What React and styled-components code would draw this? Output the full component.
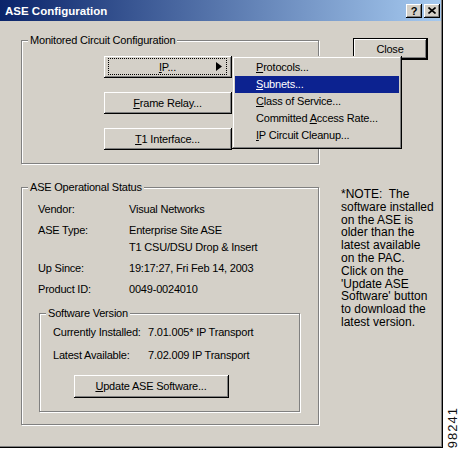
import React from "react";
import styled, { createGlobalStyle } from "styled-components";

const GlobalStyle = createGlobalStyle`
  html, body {
    margin: 0;
    padding: 0;
    background: #ffffff;
  }
  body {
    font-family: "Liberation Sans", Arial, sans-serif;
    font-size: 11px;
    letter-spacing: -0.2px;
    color: #000000;
  }
`;

const Page = styled.div`
  display: flex;
  width: 460px;
  height: 449px;
`;

const Window = styled.div`
  width: 446px;
  height: 448px;
  box-sizing: border-box;
  padding: 0 2px 2px 0;
  background: #d4d0c8;
  box-shadow: inset -1px -1px #000000, inset -2px -2px #808080;
  display: flex;
  flex-direction: column;
`;

const TitleBar = styled.div`
  flex: none;
  height: 21px;
  display: flex;
  align-items: center;
  padding: 0 1px 0 5px;
  background: linear-gradient(to right, #0a246a, #a6caf0);
`;

const Title = styled.span`
  flex: 1;
  color: #ffffff;
  font-weight: bold;
  font-size: 11.5px;
  letter-spacing: 0;
`;

const CaptionButtons = styled.div`
  display: flex;
  gap: 2px;
`;

const CaptionButton = styled.button`
  width: 16px;
  height: 14px;
  padding: 0;
  border: none;
  background: #d4d0c8;
  box-shadow: inset -1px -1px #000000, inset 1px 1px #ffffff, inset -2px -2px #808080;
  display: flex;
  align-items: center;
  justify-content: center;
  font: bold 11px "Liberation Sans", Arial, sans-serif;
  color: #000000;
`;

const Body = styled.div`
  flex: 1;
  display: grid;
  grid-template-columns: 298px 1fr;
  grid-template-rows: auto auto;
  align-content: start;
  align-items: start;
  row-gap: 23px;
  padding: 19px 0 0 21px;
`;

const Group = styled.div`
  border: 1px solid #808080;
  box-shadow: inset 1px 1px #ffffff, 1px 1px #ffffff;
  margin: ${(p) => p.$margin || "0"};
  width: ${(p) => p.$width || "auto"};
  box-sizing: border-box;
`;

const GroupCaption = styled.div`
  width: fit-content;
  margin: -7px 0 0 6px;
  padding: 0 2px;
  line-height: 13px;
  background: #d4d0c8;
  white-space: nowrap;
`;

const GroupBody = styled.div`
  padding: ${(p) => p.$pad};
`;

const ButtonColumn = styled.div`
  display: flex;
  flex-direction: column;
  gap: 14px;
  padding: 9px 0 13px 82px;
`;

const Anchor = styled.div`
  position: relative;
  width: fit-content;
`;

const Button = styled.button`
  width: ${(p) => p.$w}px;
  height: ${(p) => p.$h || 22}px;
  margin: ${(p) => p.$margin || "0"};
  padding: 0;
  border: none;
  background: #d4d0c8;
  font: 11px "Liberation Sans", Arial, sans-serif;
  letter-spacing: -0.2px;
  color: #000000;
  display: flex;
  box-shadow: ${(p) =>
    p.$default
      ? "inset 0 0 0 1px #000, inset -2px -2px #000, inset 2px 2px #fff, inset -3px -3px #808080"
      : "inset -1px -1px #000, inset 1px 1px #fff, inset -2px -2px #808080"};
`;

const Face = styled.span`
  flex: 1;
  display: grid;
  grid-template-columns: 1fr auto 1fr;
  align-items: center;
  margin: 2px 5px 3px 4px;
  border: 1px dotted ${(p) => (p.$focused ? "#000" : "transparent")};
`;

const Label = styled.span`
  grid-column: 2;
  white-space: nowrap;
`;

const Arrow = styled.svg`
  grid-column: 3;
  justify-self: end;
  margin-right: 4px;
`;

const Menu = styled.div`
  position: absolute;
  left: 100%;
  top: 0;
  width: 170px;
  box-sizing: border-box;
  padding: 3px 3px 5px;
  background: #d4d0c8;
  box-shadow: inset -1px -1px #000, inset 1px 1px #d4d0c8, inset -2px -2px #808080, inset 2px 2px #fff;
  z-index: 2;
`;

const MenuItem = styled.div`
  height: 17px;
  line-height: 17px;
  padding-left: 21px;
  white-space: nowrap;
  background: ${(p) => (p.$active ? "#0c2290" : "transparent")};
  color: ${(p) => (p.$active ? "#ffffff" : "#000000")};
`;

const RightCell = styled.div`
  padding-left: ${(p) => p.$indent}px;
  margin-top: ${(p) => p.$top}px;
`;

const InfoGrid = styled.div`
  display: grid;
  grid-template-columns: ${(p) => p.$labelWidth}px auto;
  row-gap: ${(p) => p.$gap}px;
  line-height: 17px;
  margin: ${(p) => p.$margin};
  white-space: nowrap;
`;

const Note = styled.div`
  font-size: 12px;
  letter-spacing: 0;
  line-height: 12.8px;
  white-space: pre;
`;

const Side = styled.div`
  flex: 1;
  display: flex;
  align-items: flex-end;
  justify-content: center;
`;

const FigureId = styled.span`
  writing-mode: vertical-rl;
  transform: rotate(180deg);
  font-size: 13px;
  letter-spacing: 1px;
  margin: 0 0 1px 2px;
  color: #111111;
`;

const noteLines = [
  "*NOTE:  The",
  "software installed",
  "on the ASE is",
  "older than the",
  "latest available",
  "on the PAC.",
  "Click on the",
  "'Update ASE",
  "Software' button",
  "to download the",
  "latest version.",
];

const menuItems = [
  { key: "P", rest: "rotocols..." },
  { key: "S", rest: "ubnets...", active: true },
  { key: "C", rest: "lass of Service..." },
  { pre: "Committed ", key: "A", rest: "ccess Rate..." },
  { key: "I", rest: "P Circuit Cleanup..." },
];

export default function App() {
  return (
    <>
      <GlobalStyle />
      <Page>
        <Window>
          <TitleBar>
            <Title>ASE Configuration</Title>
            <CaptionButtons>
              <CaptionButton>?</CaptionButton>
              <CaptionButton>
                <svg width="8" height="7" viewBox="0 0 8 7">
                  <path d="M0.5 0.5 L7.5 6.5 M7.5 0.5 L0.5 6.5" stroke="#000" strokeWidth="1.6" />
                </svg>
              </CaptionButton>
            </CaptionButtons>
          </TitleBar>

          <Body>
            <Group>
              <GroupCaption>Monitored Circuit Configuration</GroupCaption>
              <ButtonColumn>
                <Anchor>
                  <Button $w={128}>
                    <Face $focused>
                      <Label>
                        <u>I</u>P...
                      </Label>
                      <Arrow width="6" height="9" viewBox="0 0 6 9">
                        <path d="M0 0 L6 4.5 L0 9 Z" fill="#000" />
                      </Arrow>
                    </Face>
                  </Button>
                  <Menu>
                    {menuItems.map((m) => (
                      <MenuItem key={m.rest} $active={m.active}>
                        {m.pre}
                        <u>{m.key}</u>
                        {m.rest}
                      </MenuItem>
                    ))}
                  </Menu>
                </Anchor>
                <Button $w={128}>
                  <Face>
                    <Label>
                      <u>F</u>rame Relay...
                    </Label>
                  </Face>
                </Button>
                <Button $w={128}>
                  <Face>
                    <Label>
                      <u>T</u>1 Interface...
                    </Label>
                  </Face>
                </Button>
              </ButtonColumn>
            </Group>

            <RightCell $indent={34} $top={-2}>
              <Button $w={75} $default>
                <Face>
                  <Label>Close</Label>
                </Face>
              </Button>
            </RightCell>

            <Group>
              <GroupCaption>ASE Operational Status</GroupCaption>
              <GroupBody $pad="0 18px 12px 16px">
                <InfoGrid $labelWidth={91} $gap={4} $margin="7px 0 0 0">
                  <span>Vendor:</span>
                  <span>Visual Networks</span>
                  <span>ASE Type:</span>
                  <span>
                    Enterprise Site ASE
                    <br />
                    T1 CSU/DSU Drop &amp; Insert
                  </span>
                  <span>Up Since:</span>
                  <span>19:17:27, Fri Feb 14, 2003</span>
                  <span>Product ID:</span>
                  <span>0049-0024010</span>
                </InfoGrid>
                <Group $margin="15px 0 0 1px" $width="261px">
                  <GroupCaption>Software Version</GroupCaption>
                  <GroupBody $pad="0 0 13px 13px">
                    <InfoGrid $labelWidth={95} $gap={6} $margin="4px 0 0 0">
                      <span>Currently Installed:</span>
                      <span>7.01.005* IP Transport</span>
                      <span>Latest Available:</span>
                      <span>7.02.009 IP Transport</span>
                    </InfoGrid>
                    <Button $w={155} $h={23} $margin="11px 0 0 21px">
                      <Face>
                        <Label>
                          <u>U</u>pdate ASE Software...
                        </Label>
                      </Face>
                    </Button>
                  </GroupBody>
                </Group>
              </GroupBody>
            </Group>

            <RightCell $indent={22} $top={1}>
              <Note>{noteLines.join("\n")}</Note>
            </RightCell>
          </Body>
        </Window>
        <Side>
          <FigureId>98241</FigureId>
        </Side>
      </Page>
    </>
  );
}
